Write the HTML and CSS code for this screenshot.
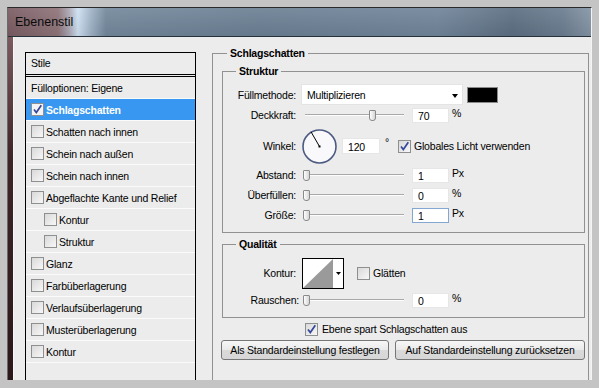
FILE: index.html
```html
<!DOCTYPE html>
<html lang="de">
<head>
  <meta charset="UTF-8">
  <title>Ebenenstil</title>
  <link rel="stylesheet" href="styles.css">
</head>
<body>
  <div class="window">
    <div class="titlebar">Ebenenstil</div>
    <div class="frame">
      <div class="frame-edge"></div>
      <div class="content">

        <!-- style list -->
        <div class="styles-list">
          <div class="list-head">Stile</div>
          <div class="list-item">Fülloptionen: Eigene</div>
          <div class="list-item selected">
            <span class="check"><svg viewBox="0 0 11 11"><path d="M2 5.5 L4.3 8.6 L9.3 1.2"/></svg></span>Schlagschatten
          </div>
          <div class="list-item"><span class="check"></span>Schatten nach innen</div>
          <div class="list-item"><span class="check"></span>Schein nach außen</div>
          <div class="list-item"><span class="check"></span>Schein nach innen</div>
          <div class="list-item"><span class="check"></span>Abgeflachte Kante und Relief</div>
          <div class="list-item sub"><span class="check"></span>Kontur</div>
          <div class="list-item sub"><span class="check"></span>Struktur</div>
          <div class="list-item"><span class="check"></span>Glanz</div>
          <div class="list-item"><span class="check"></span>Farbüberlagerung</div>
          <div class="list-item"><span class="check"></span>Verlaufsüberlagerung</div>
          <div class="list-item"><span class="check"></span>Musterüberlagerung</div>
          <div class="list-item"><span class="check"></span>Kontur</div>
        </div>

        <!-- settings -->
        <div class="settings">
          <fieldset class="group main">
            <legend>Schlagschatten</legend>

            <fieldset class="group inner struktur">
              <legend>Struktur</legend>

              <div class="row h21">
                <span class="lbl">Füllmethode:</span>
                <div class="select">Multiplizieren<span class="arrow"></span></div>
                <div class="swatch"></div>
              </div>

              <div class="row">
                <span class="lbl">Deckkraft:</span>
                <div class="slider"><span class="thumb" style="--v: 0.7"></span></div>
                <div class="num">70</div>
                <span class="unit">%</span>
              </div>

              <div class="row h40">
                <span class="lbl">Winkel:</span>
                <div class="dial">
                  <svg viewBox="0 0 35 35">
                    <circle cx="17.5" cy="17.5" r="16.5" class="dial-ring"/>
                    <line x1="17.5" y1="17.5" x2="9" y2="2.8" class="dial-hand"/>
                    <rect x="16.5" y="16.5" width="2" height="2" fill="#000"/>
                  </svg>
                </div>
                <div class="num wide">120</div>
                <span class="deg">°</span>
                <span class="check on-light"><svg viewBox="0 0 11 11"><path d="M2 5.5 L4.3 8.6 L9.3 1.2"/></svg></span>
                <span class="opt">Globales Licht verwenden</span>
              </div>

              <div class="row">
                <span class="lbl">Abstand:</span>
                <div class="slider"><span class="thumb" style="--v: 0"></span></div>
                <div class="num">1</div>
                <span class="unit">Px</span>
              </div>

              <div class="row">
                <span class="lbl">Überfüllen:</span>
                <div class="slider"><span class="thumb" style="--v: 0"></span></div>
                <div class="num">0</div>
                <span class="unit">%</span>
              </div>

              <div class="row">
                <span class="lbl">Größe:</span>
                <div class="slider"><span class="thumb" style="--v: 0"></span></div>
                <div class="num focus">1</div>
                <span class="unit">Px</span>
              </div>
            </fieldset>

            <fieldset class="group inner qualitaet">
              <legend>Qualität</legend>

              <div class="row h30">
                <span class="lbl">Kontur:</span>
                <div class="contour">
                  <svg viewBox="0 0 42 31">
                    <rect x="0.5" y="0.5" width="41" height="30" fill="#fff" stroke="#000"/>
                    <polygon points="1,30 31,1 31,30" fill="#9a9a9a"/>
                    <polygon points="34,14 39,14 36.5,17" fill="#000"/>
                  </svg>
                </div>
                <span class="check gap"></span>
                <span class="opt">Glätten</span>
              </div>

              <div class="row rauschen">
                <span class="lbl">Rauschen:</span>
                <div class="slider"><span class="thumb" style="--v: 0"></span></div>
                <div class="num">0</div>
                <span class="unit">%</span>
              </div>
            </fieldset>

            <div class="knockout">
              <span class="check on-light"><svg viewBox="0 0 11 11"><path d="M2 5.5 L4.3 8.6 L9.3 1.2"/></svg></span>
              <span class="opt">Ebene spart Schlagschatten aus</span>
            </div>

            <div class="buttons">
              <button class="btn btn-set">Als Standardeinstellung festlegen</button>
              <button class="btn btn-reset">Auf Standardeinstellung zurücksetzen</button>
            </div>
          </fieldset>
        </div>

      </div>
    </div>
  </div>
</body>
</html>
```

FILE: styles.css
```css
html, body {
  margin: 0;
  padding: 0;
}

body {
  width: 599px;
  height: 388px;
  box-sizing: border-box;
  padding: 7px 7px 8px 7px;
  overflow: hidden;
  background: #c4c4c4;
  font-family: "Liberation Sans", Arial, sans-serif;
  font-size: 10.5px;
  letter-spacing: -0.2px;
  color: #000;
}

.window {
  height: 373px;
  box-sizing: border-box;
  display: flex;
  flex-direction: column;
  border-top: 1px solid #2a2a2a;
  border-left: 1px solid #6a6a6a;
  border-right: 1px solid #f4f4f4;
}

.titlebar {
  height: 28px;
  line-height: 28px;
  padding-left: 7px;
  font-size: 12.5px;
  letter-spacing: 0;
  color: #0a0a0a;
  border-bottom: 1px solid #27313b;
  background:
    linear-gradient(rgba(255, 255, 255, 0.08), rgba(0, 0, 0, 0.06)),
    linear-gradient(to right, #7a5c63 0px, #8e7479 50px, #aaa8b4 61px, #cfe2f3 70px, #a3b7ca 82px, #74889c 98px, #6c8094 250px, #71859a 430px, #5d6f82 505px, #6b7d90 555px, #8595a5 583px);
}

.frame {
  flex: 1;
  display: flex;
  min-height: 0;
}

.frame-edge {
  width: 5px;
  background: linear-gradient(#7a5a5f, #3e2528 35%, #2b181a);
}

.content {
  flex: 1;
  display: flex;
  padding: 10px 2px 0 11px;
  border-left: 1px solid #f6f6f6;
  background: #ececec;
  overflow: hidden;
}

/* style list */
.styles-list {
  width: 171px;
  box-sizing: border-box;
  margin: 5px 16px 0 0;
  border: 1px solid #000;
  border-bottom: none;
}

.list-head {
  height: 21px;
  line-height: 21px;
  padding-left: 5px;
  border-bottom: 3px double #000;
}

.list-item {
  height: 21px;
  display: flex;
  align-items: center;
  padding-left: 5px;
  border-bottom: 1px solid #fbfbfb;
  white-space: nowrap;
}

.list-item.sub {
  padding-left: 18px;
}

.list-item.selected {
  background: #3897f0;
  color: #fff;
  font-weight: bold;
}

.check {
  width: 13px;
  height: 13px;
  box-sizing: border-box;
  flex: none;
  margin-right: 2px;
  border: 1px solid #8e8f8f;
  background: linear-gradient(135deg, #d9d9d9, #f7f7f7);
  display: inline-flex;
  align-items: center;
  justify-content: center;
}

.check svg {
  width: 11px;
  height: 11px;
}

.check path {
  fill: none;
  stroke: #34479a;
  stroke-width: 1.7;
}

.selected .check {
  background: #f4f4f4;
}

/* settings */
.settings {
  flex: 1;
  display: flex;
  flex-direction: column;
  min-width: 0;
}

.group {
  margin: 0;
  border: 1px solid #919191;
  min-width: 0;
}

.group legend {
  font-weight: bold;
  line-height: 13px;
  padding: 0 3px;
}

.main {
  flex: 1;
  padding: 0 3px 0 9px;
  border-bottom: none;
}

.main > legend {
  margin-left: 5px;
}

.inner {
  padding: 0 0 7px 0;
  margin-top: 5px;
}

.inner > legend {
  margin-left: 13px;
}

.struktur .row:first-of-type {
  margin-top: 6px;
}

.row {
  height: 20px;
  display: flex;
  align-items: center;
  white-space: nowrap;
}

.row.h21 { height: 21px; }
.row.h30 { height: 30px; margin-top: 7px; }
.row.h40 { height: 40px; margin-top: 1px; margin-bottom: -1px; }
.row.rauschen { margin-top: 2px; }

.lbl {
  width: 73px;
  margin-right: 5px;
  text-align: right;
}

.rauschen .lbl {
  width: 76px;
  margin-right: 2px;
}

.select {
  width: 162px;
  height: 21px;
  box-sizing: border-box;
  display: flex;
  align-items: center;
  justify-content: space-between;
  padding: 0 4px 0 5px;
  background: #fff;
  border: 1px solid #e4e4e4;
}

.arrow {
  width: 0;
  height: 0;
  border-left: 3.5px solid transparent;
  border-right: 3.5px solid transparent;
  border-top: 4px solid #000;
  margin-top: 2px;
}

.swatch {
  width: 31px;
  height: 16px;
  box-sizing: border-box;
  margin-left: 4px;
  background: #000;
  border: 1px solid #8a8a8a;
}

.slider {
  position: relative;
  width: 101px;
  height: 11px;
  margin-left: 2px;
}

.slider::before {
  content: "";
  position: absolute;
  left: 2px;
  right: 0;
  top: 4px;
  border-top: 1px solid #a9a9a9;
  border-bottom: 1px solid #fdfdfd;
}

.thumb {
  position: absolute;
  top: 0;
  left: calc(var(--v) * (100% - 7px));
  width: 7px;
  height: 11px;
  box-sizing: border-box;
  border: 1px solid #8a8a8a;
  border-radius: 1px 1px 3px 3px;
  background: linear-gradient(to right, #fdfdfd, #d6d6d6);
}

.num {
  width: 37px;
  height: 15px;
  line-height: 15px;
  box-sizing: border-box;
  margin-left: 8px;
  padding-left: 5px;
  background: #fff;
  border: 1px solid #e6e6e6;
}

.num.wide {
  width: 38px;
  height: 16px;
  line-height: 16px;
  margin-left: 5px;
}

.num.focus {
  border-color: #84a6d2;
}

.unit {
  margin-left: 3px;
  margin-top: -5px;
}

.deg {
  margin-left: 5px;
  margin-top: -8px;
}

.dial {
  width: 35px;
  height: 35px;
  margin-left: 1px;
}

.dial svg {
  display: block;
  width: 35px;
  height: 35px;
}

.dial-ring {
  fill: #f9f9fb;
  stroke: #4d5b82;
  stroke-width: 1.6;
}

.dial-hand {
  stroke: #000;
  stroke-width: 1;
}

.check.on-light {
  margin-left: 9px;
}

.opt {
  margin-left: 1px;
}

.contour {
  width: 42px;
  height: 31px;
  margin-left: 1px;
}

.contour svg {
  display: block;
  width: 42px;
  height: 31px;
}

.check.gap {
  margin-left: 13px;
}

.knockout {
  height: 20px;
  display: flex;
  align-items: center;
  padding-left: 83px;
  margin-top: 1px;
}

.knockout .check.on-light {
  margin-left: 0;
  margin-right: 3px;
}

.buttons {
  display: flex;
  gap: 6px;
  margin: 1px 0 0 -1px;
}

.btn {
  height: 20px;
  padding: 0;
  font-family: inherit;
  font-size: 10.5px;
  letter-spacing: -0.2px;
  color: #000;
  background: linear-gradient(#f7f7f7, #e9e9e9 50%, #dadada 51%, #d6d6d6);
  border: 1px solid #767676;
  border-radius: 3px;
}

.btn-set {
  width: 168px;
}

.btn-reset {
  width: 190px;
}
```
